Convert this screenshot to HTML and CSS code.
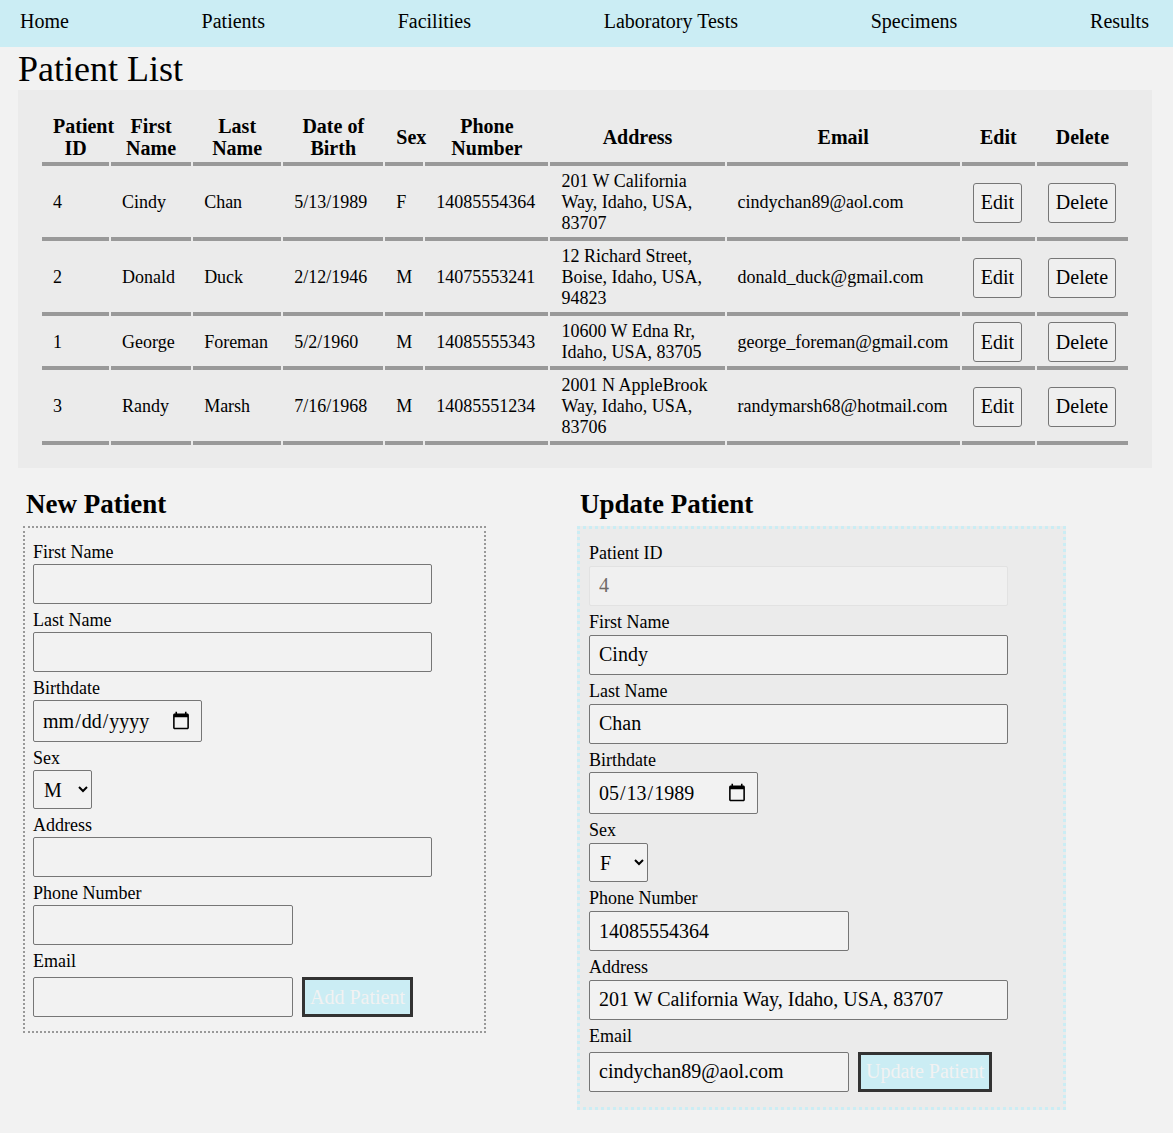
FILE: index.html
```html
<!DOCTYPE html>
<html lang="en">
<head>
<meta charset="utf-8">
<title>Patient List</title>
<link rel="stylesheet" href="styles.css">
</head>
<body>
<nav class="nav">
  <a href="#">Home</a>
  <a href="#">Patients</a>
  <a href="#">Facilities</a>
  <a href="#">Laboratory Tests</a>
  <a href="#">Specimens</a>
  <a href="#">Results</a>
</nav>
<h1 class="title">Patient List</h1>
<div class="table-box">
  <table class="ptable">
    <colgroup>
      <col class="c-id"><col class="c-first"><col class="c-last"><col class="c-dob"><col class="c-sex">
      <col class="c-phone"><col class="c-addr"><col class="c-email"><col class="c-edit"><col class="c-del">
    </colgroup>
    <thead>
      <tr>
        <th>Patient ID</th><th>First Name</th><th>Last Name</th><th>Date of Birth</th><th>Sex</th>
        <th>Phone Number</th><th>Address</th><th>Email</th><th>Edit</th><th>Delete</th>
      </tr>
    </thead>
    <tbody>
      <tr>
        <td>4</td><td>Cindy</td><td>Chan</td><td>5/13/1989</td><td>F</td><td>14085554364</td>
        <td>201 W California Way, Idaho, USA, 83707</td><td>cindychan89@aol.com</td>
        <td><button class="btn">Edit</button></td><td><button class="btn">Delete</button></td>
      </tr>
      <tr>
        <td>2</td><td>Donald</td><td>Duck</td><td>2/12/1946</td><td>M</td><td>14075553241</td>
        <td>12 Richard Street, Boise, Idaho, USA, 94823</td><td>donald_duck@gmail.com</td>
        <td><button class="btn">Edit</button></td><td><button class="btn">Delete</button></td>
      </tr>
      <tr>
        <td>1</td><td>George</td><td>Foreman</td><td>5/2/1960</td><td>M</td><td>14085555343</td>
        <td>10600 W Edna Rr, Idaho, USA, 83705</td><td>george_foreman@gmail.com</td>
        <td><button class="btn">Edit</button></td><td><button class="btn">Delete</button></td>
      </tr>
      <tr>
        <td>3</td><td>Randy</td><td>Marsh</td><td>7/16/1968</td><td>M</td><td>14085551234</td>
        <td>2001 N AppleBrook Way, Idaho, USA, 83706</td><td>randymarsh68@hotmail.com</td>
        <td><button class="btn">Edit</button></td><td><button class="btn">Delete</button></td>
      </tr>
    </tbody>
  </table>
</div>

<div class="forms">
  <section class="col col-new">
    <h2 class="form-title">New Patient</h2>
    <form class="form form-new">
      <label class="lbl">First Name</label>
      <input class="field wide" type="text">
      <label class="lbl">Last Name</label>
      <input class="field wide" type="text">
      <label class="lbl">Birthdate</label>
      <input class="field date" type="date">
      <label class="lbl">Sex</label>
      <select class="sel"><option>M</option><option>F</option></select>
      <label class="lbl">Address</label>
      <input class="field wide" type="text">
      <label class="lbl">Phone Number</label>
      <input class="field short" type="text">
      <label class="lbl">Email</label>
      <div class="row">
        <input class="field short" type="text">
        <button class="submit" type="button">Add Patient</button>
      </div>
    </form>
  </section>

  <section class="col col-upd">
    <h2 class="form-title">Update Patient</h2>
    <form class="form form-upd">
      <label class="lbl">Patient ID</label>
      <input class="field wide ro" type="text" value="4" disabled>
      <label class="lbl">First Name</label>
      <input class="field wide" type="text" value="Cindy">
      <label class="lbl">Last Name</label>
      <input class="field wide" type="text" value="Chan">
      <label class="lbl">Birthdate</label>
      <input class="field date" type="date" value="1989-05-13">
      <label class="lbl">Sex</label>
      <select class="sel"><option>M</option><option selected>F</option></select>
      <label class="lbl">Phone Number</label>
      <input class="field short" type="text" value="14085554364">
      <label class="lbl">Address</label>
      <input class="field wide" type="text" value="201 W California Way, Idaho, USA, 83707">
      <label class="lbl">Email</label>
      <div class="row">
        <input class="field short" type="text" value="cindychan89@aol.com">
        <button class="submit" type="button">Update Patient</button>
      </div>
    </form>
  </section>
</div>
</body>
</html>
```

FILE: styles.css
```css
body {
  margin: 0;
  background: #f2f2f2;
  font-family: "Liberation Serif", "Times New Roman", serif;
  font-size: 18px;
  color: #000;
}

.nav {
  display: flex;
  justify-content: space-between;
  background: #cbedf4;
  padding: 10px 24px 14px 20px;
  font-size: 20px;
  line-height: 23px;
}

.nav a {
  color: #000;
  text-decoration: none;
}

.title {
  font-size: 36px;
  font-weight: normal;
  line-height: 41px;
  margin: 2px 0 0 18px;
}

.table-box {
  background: #ebebeb;
  margin: 0 21px 0 18px;
  padding: 20px 22px 21px;
}

.ptable {
  width: 100%;
  table-layout: fixed;
  border-spacing: 2px;
}

.ptable th,
.ptable td {
  padding: 3px 11px;
  border-bottom: 4px solid #999;
  vertical-align: middle;
  text-align: left;
  font-size: 18px;
  line-height: 21px;
}

.ptable th {
  text-align: center;
  font-weight: bold;
  font-size: 20px;
  line-height: 22px;
  padding: 3px 11px;
}

.c-id { width: 67px; }
.c-first { width: 80px; }
.c-last { width: 88px; }
.c-dob { width: 100px; }
.c-sex { width: 38px; }
.c-phone { width: 123px; }
.c-addr { width: 174px; }
.c-email { width: 233px; }
.c-edit { width: 73px; }
.c-del { width: 91px; }

.btn {
  font-family: inherit;
  font-size: 20px;
  height: 40px;
  padding: 0 7px;
  border: 1px solid #767676;
  border-radius: 3px;
  background: #efefef;
  color: #000;
}

.forms {
  display: flex;
  align-items: flex-start;
  gap: 91px;
  padding-left: 23px;
  margin-top: 21px;
}

.col-new { width: 463px; }
.col-upd { width: 489px; }

.form-title {
  font-size: 27px;
  line-height: 31px;
  margin: 0 0 6px;
  padding-left: 3px;
}

.form {
  margin: 0;
}

.form-new {
  border: 2px dotted #999;
  padding: 8px 8px 14px;
}

.form-upd {
  border: 3px dotted #cbedf4;
  background: #ebebeb;
  padding: 8px 9px 15px;
}

.lbl {
  display: block;
  margin: 6px 0 1px;
  line-height: 21px;
  font-size: 18px;
}

.form-upd .lbl {
  margin-bottom: 1.85px;
}

.field {
  display: block;
  box-sizing: border-box;
  height: 40px;
  padding: 0 9px;
  border: 1px solid #767676;
  border-radius: 2px;
  background: #f2f2f2;
  font-family: inherit;
  font-size: 20px;
  color: #000;
}

.form-new .wide { width: 399px; }
.form-upd .wide { width: 419px; }
.short { width: 260px; }

.date {
  width: 169px;
  height: 42px;
  padding: 0 8px;
}

.ro {
  background: #f0f0f0;
  border-color: #e2e2e2;
  color: #6f6a66;
}

.sel {
  display: block;
  box-sizing: border-box;
  width: 59px;
  height: 39px;
  padding: 0 6px;
  border: 1px solid #767676;
  border-radius: 2px;
  background: #f2f2f2;
  font-family: inherit;
  font-size: 20px;
  color: #000;
}

.row {
  display: flex;
  gap: 9px;
  margin-top: 5px;
}

.submit {
  box-sizing: border-box;
  height: 40px;
  padding: 0 5px;
  border: 3px solid #333;
  background: #cbedf4;
  color: #f2f2f2;
  font-family: inherit;
  font-size: 20px;
}
```
